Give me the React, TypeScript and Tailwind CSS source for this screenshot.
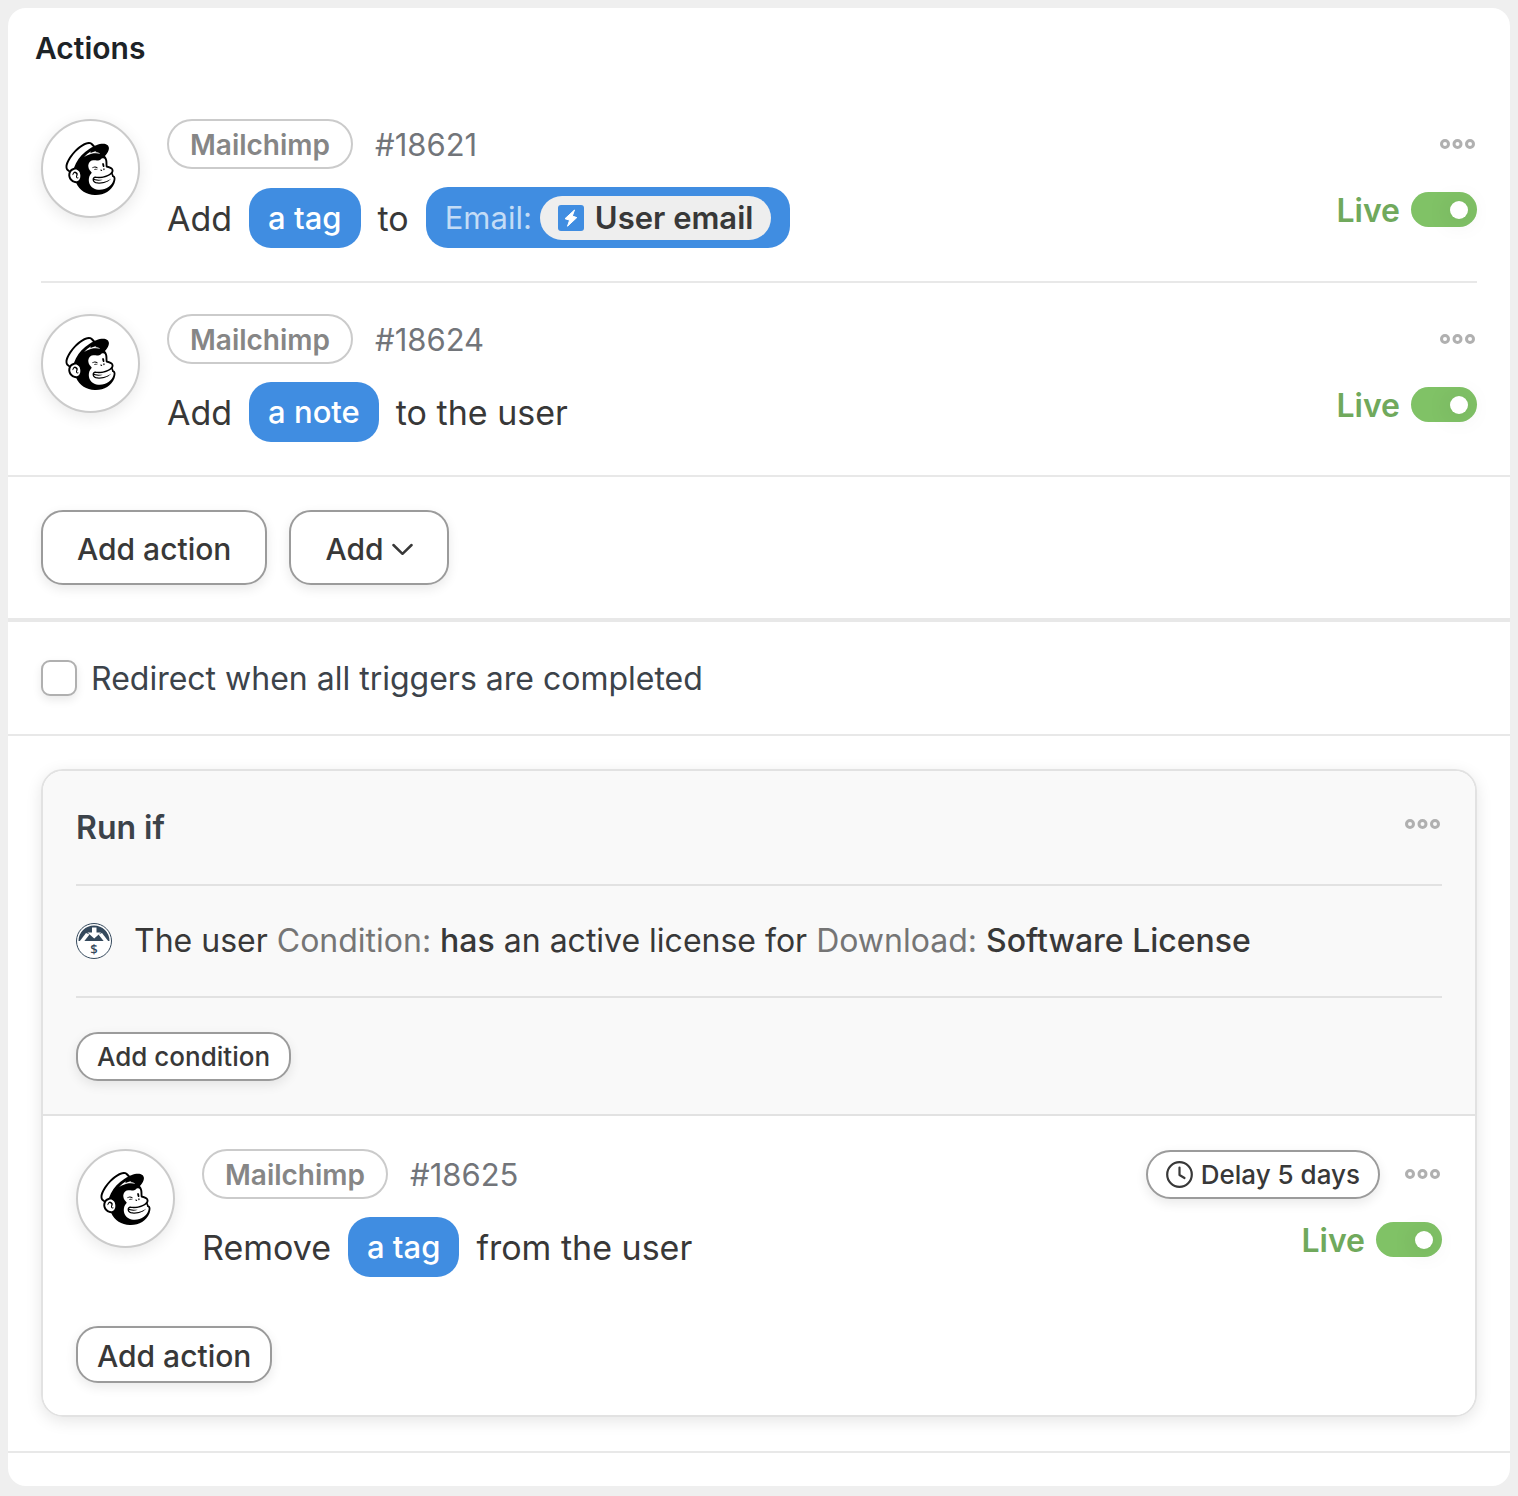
import type { ReactNode } from "react";
import { SiMailchimp } from "react-icons/si";

const OUTLINE =
  "cursor-pointer border-2 border-[#9b9b9b] bg-white font-medium text-[#383838] shadow-[0_4px_12px_rgba(0,0,0,0.09)]";

function AppBadge() {
  return (
    <div className="flex size-[99px] shrink-0 items-center justify-center rounded-full border-2 border-[#cbcbcb] bg-white shadow-[0_4px_16px_rgba(0,0,0,0.09)]">
      <SiMailchimp className="size-[53px] text-black" />
    </div>
  );
}

function MoreButton() {
  return (
    <button
      type="button"
      aria-label="More options"
      className="flex h-[50px] cursor-pointer items-center px-[2px]"
    >
      <svg width="35" height="10" viewBox="0 0 35 10" fill="none" stroke="#b0b0b0" strokeWidth="3">
        <circle cx="5" cy="5" r="3.5" />
        <circle cx="17.5" cy="5" r="3.5" />
        <circle cx="30" cy="5" r="3.5" />
      </svg>
    </button>
  );
}

function LiveSwitch() {
  return (
    <label className="flex items-center gap-[11px] text-[32px] font-semibold text-[#70a95c]">
      <span className="pt-[2px] leading-[33px]">Live</span>
      <input
        type="checkbox"
        role="switch"
        defaultChecked
        className="flex h-[35px] w-[66px] cursor-pointer appearance-none items-center rounded-full bg-[#bbbbbb] px-[9px] before:size-[18px] before:rounded-full before:bg-white before:shadow-[0_2px_24px_rgba(0,0,0,0.15)] checked:justify-end checked:bg-[#80c266]"
      />
    </label>
  );
}

function Pill({ children }: { children: ReactNode }) {
  return (
    <button
      type="button"
      className="h-[60px] cursor-pointer rounded-[22px] bg-[#408de1] px-[19px] text-[31px] font-medium text-white"
    >
      {children}
    </button>
  );
}

function EmailPill() {
  return (
    <button
      type="button"
      className="flex h-[61px] cursor-pointer items-center gap-2 rounded-[22px] bg-[#408de1] px-[19px] text-[31px]"
    >
      <span className="text-[#c3dcf6]">Email:</span>
      <span className="flex h-11 items-center gap-[11px] rounded-full bg-[#eeeeee] px-[18px] font-semibold text-[#383838]">
        <svg width="26" height="26" viewBox="0 0 26 26">
          <rect width="26" height="26" rx="3" fill="#408de1" />
          <path
            d="M16.500 5 7 13.700l4.600 1.500-2.100 6 9.300-8.600-4.500-1.600z"
            fill="#fff"
            stroke="#fff"
            strokeWidth="1"
            strokeLinejoin="round"
          />
        </svg>
        <span>User email</span>
      </span>
    </button>
  );
}

interface ActionRowProps {
  id: string;
  extra?: ReactNode;
  children: ReactNode;
}

function ActionRow({ id, extra, children }: ActionRowProps) {
  return (
    <div className="flex items-start gap-[27px]">
      <AppBadge />
      <div className="flex min-w-0 flex-1 flex-col gap-[18px]">
        <div className="flex items-center gap-[22px]">
          <span className="flex h-[50px] items-center rounded-full border-2 border-[#cbcbcb] px-[21px] pt-[2px] text-[28px] font-semibold text-[#868686]">
            Mailchimp
          </span>
          <span className="pt-[2px] text-[31px] leading-9 text-[#72757a]">{id}</span>
        </div>
        <div className="flex flex-wrap items-center gap-[17px] text-[34px] leading-[50px] text-[#383838]">
          {children}
        </div>
      </div>
      <div className="flex flex-col items-end gap-[23px]">
        <div className="flex items-center gap-[23px]">
          {extra}
          <MoreButton />
        </div>
        <LiveSwitch />
      </div>
    </div>
  );
}

function DownloadsIcon() {
  return (
    <svg className="size-9 shrink-0" viewBox="0 0 36 36">
      <circle cx="18" cy="18" r="17.5" fill="#fff" stroke="#35495c" strokeWidth="1" />
      <path d="M2.500 18A15.500 15.500 0 0 1 33.500 18z" fill="#35495c" />
      <path d="M3.500 18.500 10 10l3.500 1.500L8 18.500z" fill="#fff" />
      <path d="M32.500 18.500 26 10l-3.500 1.500L28 18.500z" fill="#fff" />
      <path d="M16 4.500h4.500V9.500H25L18.200 15.500 11.500 9.500H16z" fill="#fff" />
      <text
        x="18"
        y="31"
        textAnchor="middle"
        className="font-['Open_Sans',sans-serif] text-[13px] font-semibold"
        fill="#35495c"
      >
        $
      </text>
    </svg>
  );
}

function ClockIcon() {
  return (
    <svg
      width="27"
      height="27"
      viewBox="0 0 27 27"
      fill="none"
      stroke="#383838"
      strokeWidth="2.2"
      strokeLinecap="round"
      strokeLinejoin="round"
    >
      <circle cx="13.5" cy="13.5" r="12.3" />
      <path d="M13.500 6.500v7.500l5 3" />
    </svg>
  );
}

export default function App() {
  return (
    <main className="bg-[#efefef] px-2 pt-2 pb-[10px] font-['Inter',sans-serif]">
      <section className="rounded-[18px] bg-white pb-[33px]">
        <h1 className="flex h-20 items-center px-[27px] text-[30px] font-semibold text-[#1d2327]">
          Actions
        </h1>

        <div className="mx-[33px] border-b-2 border-[#e8e8e8] pt-[31px] pb-[33px]">
          <ActionRow id="#18621">
            <span className="pt-[2px]">Add</span>
            <Pill>a tag</Pill>
            <span className="pt-[2px]">to</span>
            <EmailPill />
          </ActionRow>
        </div>
        <div className="border-b-2 border-[#e8e8e8] px-[33px] pt-[31px] pb-[33px]">
          <ActionRow id="#18624">
            <span className="pt-[2px]">Add</span>
            <Pill>a note</Pill>
            <span className="pt-[2px]">to the user</span>
          </ActionRow>
        </div>

        <div className="flex gap-[22px] border-b-4 border-[#e8e8e8] p-[33px]">
          <button type="button" className={`${OUTLINE} h-[75px] rounded-[22px] px-[34px] pt-[3px] text-[30px]`}>
            Add action
          </button>
          <button
            type="button"
            className={`${OUTLINE} flex h-[75px] items-center gap-2 rounded-[22px] px-[34px] pt-[3px] text-[30px]`}
          >
            Add
            <svg
              width="21"
              height="13"
              viewBox="0 0 22 13"
              fill="none"
              stroke="#383838"
              strokeWidth="2.6"
              strokeLinecap="round"
              strokeLinejoin="round"
            >
              <path d="M1.500 1.800 11 11l9.500-9.200" />
            </svg>
          </button>
        </div>

        <label className="flex items-center gap-[14px] border-b-2 border-[#e8e8e8] px-[33px] py-[38px] text-[32px] leading-[34px] text-[#3c434a]">
          <input
            type="checkbox"
            className="size-9 shrink-0 appearance-none rounded-[9px] border-2 border-[#b0b0b0] bg-white shadow-[0_4px_10px_rgba(0,0,0,0.09)] checked:bg-[#408de1]"
          />
          <span className="pt-[2px]">Redirect when all triggers are completed</span>
        </label>

        <div className="border-b-2 border-[#e8e8e8] px-[33px] pt-[33px] pb-[34px]">
          <div className="overflow-hidden rounded-[22px] border-2 border-[#e2e2e2] shadow-[0_4px_16px_rgba(0,0,0,0.1)]">
            <div className="border-b-2 border-[#e2e2e2] bg-[#f9f9f9] px-[33px]">
              <div className="flex h-[115px] items-start justify-between border-b-2 border-[#e2e2e2] pt-7">
                <h2 className="text-[32px] leading-[58px] font-semibold text-[#3c434a]">Run if</h2>
                <MoreButton />
              </div>
              <div className="flex h-28 items-center gap-[22px] border-b-2 border-[#e2e2e2] text-[32px] text-[#383838]">
                <DownloadsIcon />
                <p>
                  The user <span className="text-[#757575]">Condition:</span>{" "}
                  <span className="font-medium">has</span> an active license for{" "}
                  <span className="text-[#757575]">Download:</span>{" "}
                  <span className="font-medium">Software License</span>
                </p>
              </div>
              <div className="flex pt-[34px] pb-[33px]">
                <button type="button" className={`${OUTLINE} h-[49px] rounded-[22px] px-[19px] text-[26px]`}>
                  Add condition
                </button>
              </div>
            </div>

            <div className="bg-white px-[33px] pt-[33px] pb-8">
              <ActionRow
                id="#18625"
                extra={
                  <button
                    type="button"
                    className={`${OUTLINE} flex h-[49px] items-center gap-2 rounded-full px-[18px] text-[26px]`}
                  >
                    <ClockIcon />
                    Delay 5 days
                  </button>
                }
              >
                <span className="pt-[2px]">Remove</span>
                <Pill>a tag</Pill>
                <span className="pt-[2px]">from the user</span>
              </ActionRow>
              <div className="flex pt-[49px]">
                <button
                  type="button"
                  className={`${OUTLINE} h-[57px] rounded-[22px] px-[19px] pt-[3px] text-[30px]`}
                >
                  Add action
                </button>
              </div>
            </div>
          </div>
        </div>
      </section>
    </main>
  );
}
